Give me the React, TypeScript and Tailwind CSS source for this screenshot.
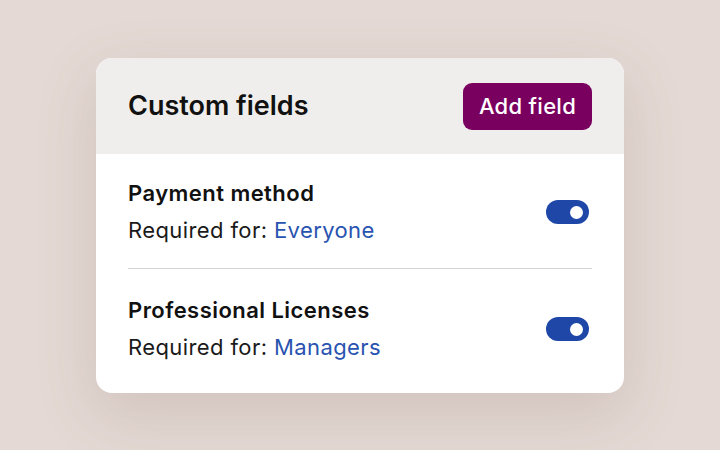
import React from "react";

function Toggle() {
  return (
    <div className="w-[43px] h-[24px] rounded-full bg-[#1e47a8] flex items-center justify-end pr-[6px]">
      <div className="w-[13px] h-[13px] rounded-full bg-white" />
    </div>
  );
}

function Row({ title, who, cls }: { title: string; who: string; cls: string }) {
  return (
    <div className={`flex items-center justify-between ${cls}`}>
      <div className="flex flex-col gap-[10px]">
        <div className="text-[22px] leading-[26px] font-semibold text-[#111] tracking-[0.45px]">{title}</div>
        <div className="text-[22px] leading-[28px] text-[#1a1a1a] tracking-[0.4px]">
          Required for: <span className="text-[#2953b0]">{who}</span>
        </div>
      </div>
      <div className="mr-[3px]">
        <Toggle />
      </div>
    </div>
  );
}

export default function App() {
  return (
    <div
      className="w-[720px] h-[450px] bg-[#e4d9d4] flex justify-center pt-[58px]"
      style={{ fontFamily: "Inter, 'Noto Sans', sans-serif" }}
    >
      <div className="w-[528px] h-[335px] bg-white rounded-[16px] overflow-hidden shadow-[0_20px_60px_rgba(120,90,80,0.18)]">
        <div className="h-[96px] bg-[#f0eeec] flex items-center justify-between pl-8 pr-8">
          <div className="text-[27px] font-semibold text-[#111] tracking-[0px]">Custom fields</div>
          <button className="w-[129px] h-[47px] rounded-[9px] bg-[#7a0060] text-white text-[22px] font-medium tracking-[0.3px]">
            Add field
          </button>
        </div>
        <div className="px-8">
          <Row title="Payment method" who="Everyone" cls="pt-[26px] pb-[24px] border-b border-[#d6d3d1]" />
          <Row title="Professional Licenses" who="Managers" cls="pt-[28px] pb-[24px]" />
        </div>
      </div>
    </div>
  );
}
